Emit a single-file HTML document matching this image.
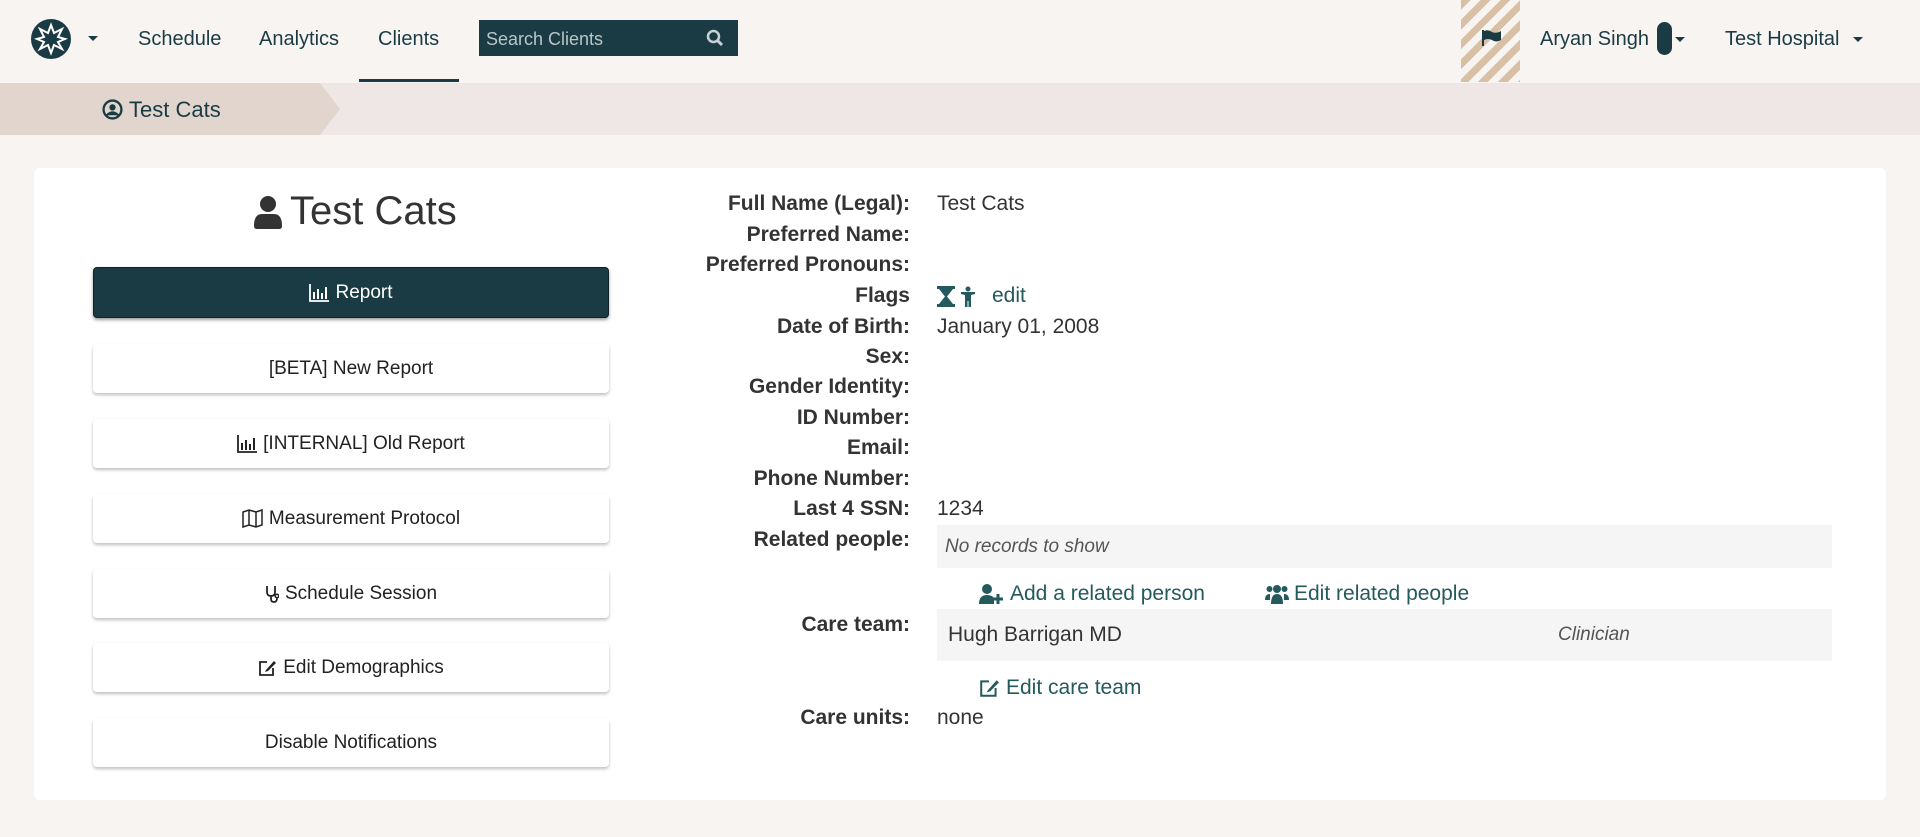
<!DOCTYPE html>
<html><head><meta charset="utf-8"><style>
*{margin:0;padding:0;box-sizing:border-box}
body{width:1920px;height:837px;background:#f7f4f1;font-family:"Liberation Sans",sans-serif;color:#333;position:relative;overflow:hidden}
.a{position:absolute;white-space:nowrap}
.nav{font-size:20px;color:#1b3b44;top:28px}
.btn{position:absolute;left:93px;width:516px;height:49px;background:#fff;border-radius:4px;box-shadow:0 2px 3px rgba(0,0,0,.25);font-size:19px;color:#222;display:flex;align-items:center;justify-content:center;gap:6px}
.lab{position:absolute;right:1010px;font-size:21px;font-weight:bold;color:#333;line-height:30px}
.val{position:absolute;left:937px;font-size:21px;color:#333;line-height:30px}
.lnk{color:#245a5c;font-size:21px}
</style></head><body>
<svg class="a" style="left:30px;top:18px" width="42" height="42" viewBox="0 0 42 42"><circle cx="21" cy="21" r="20" fill="#1b3b44"/><polygon points="21,7 24,15 32,11 28,19 35,21 28,24 32,31 24,27 21,35 18,27 10,31 14,24 7,21 14,19 10,11 18,15" fill="none" stroke="#fff" stroke-width="2"/></svg>
<div class="a" style="left:88px;top:36px;border:5px solid transparent;border-top-color:#1b3b44;border-bottom:0"></div>
<div class="a nav" style="left:138px">Schedule</div>
<div class="a nav" style="left:259px">Analytics</div>
<div class="a nav" style="left:378px">Clients</div>
<div class="a" style="left:359px;top:79px;width:100px;height:3px;background:#1b3b44"></div>
<div class="a" style="left:479px;top:20px;width:259px;height:36px;background:#1b3b44"></div>
<div class="a" style="left:486px;top:29px;font-size:18px;color:#b8c6c8">Search Clients</div>
<svg class="a" style="left:706px;top:29px" width="18" height="18" viewBox="0 0 18 18"><circle cx="7.5" cy="7.5" r="5.5" fill="none" stroke="#c8d2d4" stroke-width="2.5"/><line x1="11.5" y1="11.5" x2="16" y2="16" stroke="#c8d2d4" stroke-width="3"/></svg>
<div class="a" style="left:1461px;top:0;width:59px;height:82px;background:repeating-linear-gradient(135deg,#d9bfa3 0 7px,#f7f4f1 7px 14px)"></div>
<svg class="a" style="left:1482px;top:30px" width="20" height="16" viewBox="0 0 20 16"><rect x="0" y="0" width="2" height="16" fill="#1b3b44"/><path d="M2 1 Q6 -1 10 2 Q14 4 19 1 L19 10 Q14 13 10 10 Q6 8 2 10Z" fill="#1b3b44"/></svg>
<div class="a nav" style="left:1540px">Aryan Singh</div>
<div class="a" style="left:1657px;top:22px;width:15px;height:33px;border-radius:8px;background:#1b3b44"></div>
<div class="a" style="left:1675px;top:37px;border:5px solid transparent;border-top-color:#1b3b44;border-bottom:0"></div>
<div class="a nav" style="left:1725px">Test Hospital</div>
<div class="a" style="left:1853px;top:37px;border:5px solid transparent;border-top-color:#1b3b44;border-bottom:0"></div>
<div class="a" style="left:0;top:83px;width:1920px;height:52px;background:#efe7e5"></div>
<svg class="a" style="left:0;top:83px" width="345" height="52"><polygon points="0,0 320,0 340,26 320,52 0,52" fill="#e2d5ce"/></svg>
<svg class="a" style="left:102px;top:99px" width="21" height="21" viewBox="0 0 20 20"><circle cx="10" cy="10" r="8.5" fill="none" stroke="#1b3b44" stroke-width="2.2"/><circle cx="10" cy="8" r="3" fill="#1b3b44"/><path d="M4.5 15.5 Q10 10 15.5 15.5" fill="#1b3b44" stroke="#1b3b44" stroke-width="2"/></svg>
<div class="a" style="left:129px;top:97px;font-size:22px;color:#1b3b44">Test Cats</div>
<div class="a" style="left:34px;top:168px;width:1852px;height:632px;background:#fff;border-radius:6px"></div>
<svg class="a" style="left:254px;top:196px" width="28" height="33" viewBox="0 0 28 33"><circle cx="14" cy="8" r="8" fill="#333"/><path d="M0 30 Q0 18 8 18 L20 18 Q28 18 28 30 Q28 33 25 33 L3 33 Q0 33 0 30Z" fill="#333"/></svg>
<div class="a" style="left:290px;top:189px;font-size:40px;color:#333">Test Cats</div>
<div class="btn" style="top:267px;height:51px;background:#1b3b44;color:#fff;border:1px solid #0e2228;box-shadow:0 2px 3px rgba(0,0,0,.4)"><svg width="20" height="18" viewBox="0 0 20 18"><path d="M1 0 V17 H20" fill="none" stroke="#fff" stroke-width="1.8"/><path d="M5 8 V15 M9 5 V15 M13 9 V15 M17 3 V15" stroke="#fff" stroke-width="2"/></svg>Report</div>
<div class="btn" style="top:344px">[BETA] New Report</div>
<div class="btn" style="top:419px"><svg width="20" height="18" viewBox="0 0 20 18"><path d="M1 0 V17 H20" fill="none" stroke="#222" stroke-width="1.8"/><path d="M5 8 V15 M9 5 V15 M13 9 V15 M17 3 V15" stroke="#222" stroke-width="2"/></svg>[INTERNAL] Old Report</div>
<div class="btn" style="top:494px"><svg width="21" height="19" viewBox="0 0 21 19"><path d="M1 3 L7 1 L14 3 L20 1 L20 16 L14 18 L7 16 L1 18Z M7 1 V16 M14 3 V18" fill="none" stroke="#222" stroke-width="1.5"/></svg>Measurement Protocol</div>
<div class="btn" style="top:569px"><svg width="14" height="18" viewBox="0 0 14 18"><path d="M2 1 V7 Q2 11 6 11 Q10 11 10 7 V1 M6 11 V14 Q6 17 9 17 Q12 17 12 13" fill="none" stroke="#222" stroke-width="1.8"/><circle cx="12" cy="11" r="1.8" fill="none" stroke="#222" stroke-width="1.5"/></svg>Schedule Session</div>
<div class="btn" style="top:643px"><svg width="19" height="18" viewBox="0 0 19 18"><path d="M9 3 H2 V16 H15 V9" fill="none" stroke="#222" stroke-width="1.8"/><path d="M8 11 L16 2 L18 4 L10 12 L7 13Z" fill="#222"/></svg>Edit Demographics</div>
<div class="btn" style="top:718px">Disable Notifications</div>
<div class="lab" style="top:189px">Full Name (Legal):</div>
<div class="lab" style="top:220px">Preferred Name:</div>
<div class="lab" style="top:250px">Preferred Pronouns:</div>
<div class="lab" style="top:281px">Flags</div>
<div class="lab" style="top:312px">Date of Birth:</div>
<div class="lab" style="top:342px">Sex:</div>
<div class="lab" style="top:372px">Gender Identity:</div>
<div class="lab" style="top:403px">ID Number:</div>
<div class="lab" style="top:433px">Email:</div>
<div class="lab" style="top:464px">Phone Number:</div>
<div class="lab" style="top:494px">Last 4 SSN:</div>
<div class="lab" style="top:525px">Related people:</div>
<div class="lab" style="top:610px">Care team:</div>
<div class="lab" style="top:703px">Care units:</div>
<div class="val" style="top:189px">Test Cats</div>
<svg class="a" style="left:937px;top:286px" width="40" height="21" viewBox="0 0 40 21"><path d="M0 0 H18 V3 H16 L10 10.5 L16 18 H18 V21 H0 V18 H2 L8 10.5 L2 3 H0Z" fill="#245a5c"/><circle cx="31" cy="3" r="2.5" fill="#245a5c"/><path d="M24 6 L38 6 L38 8 L34 9 L34 21 L31.5 21 L31.5 15 L30.5 15 L30.5 21 L28 21 L28 9 L24 8Z" fill="#245a5c"/></svg>
<div class="a lnk" style="left:992px;top:284px">edit</div>
<div class="val" style="top:312px">January 01, 2008</div>
<div class="val" style="top:494px">1234</div>
<div class="a" style="left:937px;top:525px;width:895px;height:43px;background:#f5f5f5"></div>
<div class="a" style="left:945px;top:536px;font-size:19px;font-style:italic;color:#555">No records to show</div>
<svg class="a" style="left:979px;top:584px" width="25" height="20" viewBox="0 0 25 20"><circle cx="8" cy="5" r="5" fill="#245a5c"/><path d="M0 20 Q0 11 8 11 Q13 11 15 14 L15 20Z" fill="#245a5c"/><path d="M19 10 V20 M14 15 H24" stroke="#245a5c" stroke-width="3"/></svg>
<div class="a lnk" style="left:1010px;top:582px">Add a related person</div>
<svg class="a" style="left:1265px;top:584px" width="24" height="20" viewBox="0 0 24 20"><circle cx="12" cy="5" r="4" fill="#245a5c"/><circle cx="4.5" cy="5" r="3" fill="#245a5c"/><circle cx="19.5" cy="5" r="3" fill="#245a5c"/><path d="M6 20 Q6 10 12 10 Q18 10 18 20Z M0 16 Q0 10 5 10 L5 16Z M24 16 Q24 10 19 10 L19 16Z" fill="#245a5c"/></svg>
<div class="a lnk" style="left:1294px;top:582px">Edit related people</div>
<div class="a" style="left:937px;top:609px;width:895px;height:52px;background:#f5f5f5"></div>
<div class="a" style="left:948px;top:623px;font-size:21px;color:#333">Hugh Barrigan MD</div>
<div class="a" style="left:1558px;top:624px;font-size:19px;font-style:italic;color:#555">Clinician</div>
<svg class="a" style="left:979px;top:678px" width="21" height="20" viewBox="0 0 19 18"><path d="M9 3 H2 V16 H15 V9" fill="none" stroke="#245a5c" stroke-width="1.8"/><path d="M8 11 L16 2 L18 4 L10 12 L7 13Z" fill="#245a5c"/></svg>
<div class="a lnk" style="left:1006px;top:676px">Edit care team</div>
<div class="val" style="top:703px">none</div>
</body></html>
